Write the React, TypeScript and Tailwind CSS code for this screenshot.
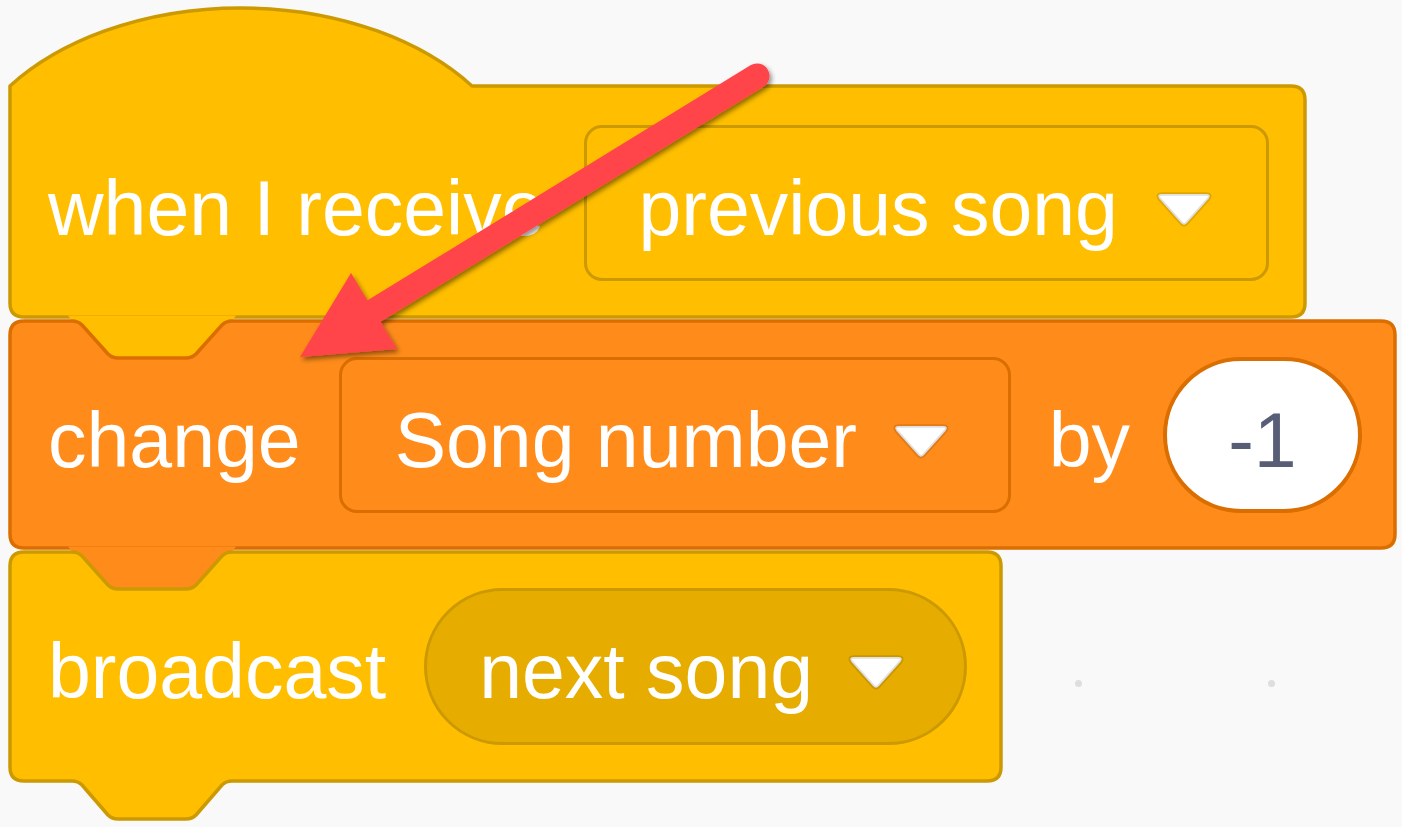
import React from "react";

const HAT =
  "M10 86 A287 192 0 0 1 472 86 L1291 86 Q1305 86 1305 100 L1305 303 Q1305 317 1291 317 L24 317 Q10 317 10 303 Z";
const HAT_TAB = "M68 315.5 L236 315.5 L200 363 L104 363 Z";
const ORANGE =
  "M10 335 Q10 321 24 321 L72 321 Q78 321 82 325 L108 354 Q112 358 118 358 L186 358 Q192 358 196 354 L222 325 Q226 321 232 321 L1381 321 Q1395 321 1395 335 L1395 534 Q1395 548 1381 548 L24 548 Q10 548 10 534 Z";
const ORANGE_TAB = "M68 546.5 L236 546.5 L200 594 L104 594 Z";
const BROADCAST =
  "M10 566 Q10 552 24 552 L72 552 Q78 552 82 556 L108 585 Q112 589 118 589 L186 589 Q192 589 196 585 L222 556 Q226 552 232 552 L987 552 Q1001 552 1001 566 L1001 767 Q1001 781 987 781 L232 781 Q226 781 222 785 L196 815 Q192 819 186 819 L118 819 Q112 819 108 815 L82 785 Q78 781 72 781 L24 781 Q10 781 10 767 Z";

function Arrow() {
  return (
    <svg width="58" height="40" viewBox="0 0 58 40" className="shrink-0 mt-[12px]">
      <path
        d="M7 5 L51 5 Q57 5 53.5 10 L32 34 Q29 37.5 26 34 L4.5 10 Q1 5 7 5 Z"
        fill="#ffffff"
        stroke="rgba(0,0,0,0.12)"
        strokeWidth="3.5"
        strokeLinejoin="round"
      />
    </svg>
  );
}

const label = "text-[77px] leading-none text-white pt-[10px] whitespace-nowrap";

export default function App() {
  return (
    <div className="relative w-[1402px] h-[827px] overflow-hidden bg-[#f9f9f9] font-['Liberation_Sans',Arial,sans-serif]">
      <div className="flex flex-col pl-[8px] pt-[6px]">
        {/* Hat block: when I receive */}
        <div className="relative w-[1300px] h-[314px]">
          <svg
            className="absolute left-0 top-0 overflow-visible"
            width="1300"
            height="314"
            viewBox="8 6 1300 314"
          >
            <path d={HAT} fill="#FFBF00" stroke="#CC9900" strokeWidth="3.5" strokeLinejoin="round" />
            <path d={HAT_TAB} fill="#FFBF00" />
          </svg>
          <div className="relative flex h-full items-center pt-[80px] pl-[40px]">
            <span className={label}>when I receive</span>
            <div className="ml-[40px] flex h-[156px] w-[685px] shrink-0 items-center rounded-[18px] border-[3.5px] border-[#CC9900] bg-[#FFBF00] pl-[51px]">
              <span className={label}>previous song</span>
              <div className="ml-[37px]">
                <Arrow />
              </div>
            </div>
          </div>
        </div>

        {/* change block */}
        <div className="relative w-[1390px] h-[230px]">
          <svg
            className="absolute left-0 top-0 overflow-visible"
            width="1390"
            height="230"
            viewBox="8 320 1390 230"
          >
            <path d={ORANGE} fill="#FF8C1A" stroke="#DB6E00" strokeWidth="3.5" strokeLinejoin="round" />
            <path d={ORANGE_TAB} fill="#FF8C1A" />
          </svg>
          <div className="relative flex h-full items-center pl-[40px]">
            <span className={label}>change</span>
            <div className="ml-[38px] flex h-[156px] w-[672px] shrink-0 items-center rounded-[18px] border-[3.5px] border-[#DB6E00] bg-[#FF8C1A] pl-[53px]">
              <span className={label}>Song number</span>
              <div className="ml-[35px]">
                <Arrow />
              </div>
            </div>
            <span className={`${label} ml-[38px]`}>by</span>
            <div className="ml-[33px] flex h-[156px] w-[199px] shrink-0 items-center justify-center rounded-full border-[4px] border-[#DB6E00] bg-white">
              <span className="text-[77px] leading-none text-[#575E75] pt-[10px]">-1</span>
            </div>
          </div>
        </div>

        {/* broadcast block */}
        <div className="relative w-[996px] h-[232px]">
          <svg
            className="absolute left-0 top-0 overflow-visible"
            width="996"
            height="232"
            viewBox="8 550 996 232"
          >
            <path d={BROADCAST} fill="#FFBF00" stroke="#CC9900" strokeWidth="3.5" strokeLinejoin="round" />
          </svg>
          <div className="relative flex h-full items-center pl-[40px]">
            <span className={label}>broadcast</span>
            <div className="ml-[38px] flex h-[157px] w-[543px] shrink-0 items-center rounded-full border-[3.5px] border-[#CC9900] bg-[#E6AC00] pl-[52px]">
              <span className={label}>next song</span>
              <div className="ml-[34px]">
                <Arrow />
              </div>
            </div>
          </div>
        </div>
      </div>

      {/* workspace grid dots */}
      <div className="absolute left-[1075px] top-[680px] h-[7px] w-[7px] rounded-full bg-[#dedede]" />
      <div className="absolute left-[1268px] top-[680px] h-[7px] w-[7px] rounded-full bg-[#dedede]" />

      {/* red annotation arrow */}
      <svg className="pointer-events-none absolute left-0 top-0" width="1402" height="827" viewBox="0 0 1402 827">
        <defs>
          <filter id="arrowShadow" x="-10%" y="-10%" width="130%" height="130%">
            <feDropShadow dx="2" dy="3" stdDeviation="2.5" floodColor="#000000" floodOpacity="0.45" />
          </filter>
        </defs>
        <g filter="url(#arrowShadow)">
          <line x1="757" y1="76" x2="366" y2="316" stroke="#FF4548" strokeWidth="25" strokeLinecap="round" />
          <polygon points="300,357 351,273 397,349" fill="#FF4548" />
        </g>
      </svg>
    </div>
  );
}
